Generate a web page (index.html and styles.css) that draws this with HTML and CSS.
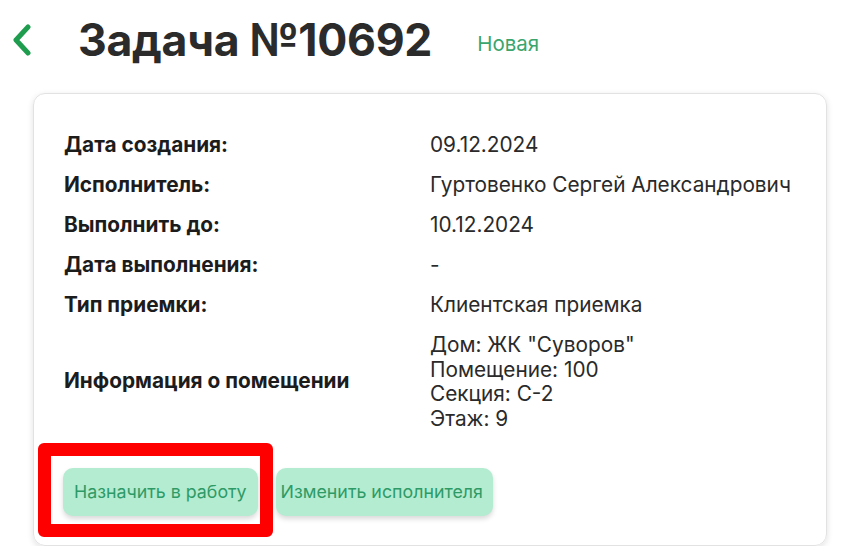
FILE: index.html
```html
<!DOCTYPE html>
<html lang="ru">
<head>
  <meta charset="UTF-8">
  <meta name="viewport" content="width=device-width, initial-scale=1.0">
  <title>Задача №10692</title>
  <link rel="stylesheet" href="styles.css">
</head>
<body>
  <header class="task-header">
    <a class="back-link" href="#">
      <svg width="22" height="32" viewBox="0 0 22 32">
        <path d="M17 3 L5 16 L17 29" fill="none" stroke="#1f9d4f" stroke-width="5" stroke-linecap="round" stroke-linejoin="round"/>
      </svg>
    </a>
    <h1 class="task-title">Задача №10692</h1>
    <span class="task-status">Новая</span>
  </header>

  <div class="task-card">
    <div class="info-grid">
      <div class="info-label">Дата создания:</div>
      <div class="info-value">09.12.2024</div>

      <div class="info-label">Исполнитель:</div>
      <div class="info-value">Гуртовенко Сергей Александрович</div>

      <div class="info-label">Выполнить до:</div>
      <div class="info-value">10.12.2024</div>

      <div class="info-label">Дата выполнения:</div>
      <div class="info-value">-</div>

      <div class="info-label">Тип приемки:</div>
      <div class="info-value">Клиентская приемка</div>

      <div class="info-label">Информация о помещении</div>
      <div class="info-value info-multi">
        Дом: ЖК "Суворов"<br>
        Помещение: 100<br>
        Секция: С-2<br>
        Этаж: 9
      </div>
    </div>

    <div class="card-actions">
      <button class="action-btn">Назначить в работу</button>
      <button class="action-btn action-btn-second">Изменить исполнителя</button>
      <div class="highlight"></div>
    </div>
  </div>
</body>
</html>
```

FILE: styles.css
```css
body {
  font-family: Inter, "Noto Sans", sans-serif;
  margin: 0;
  padding: 0;
  background-color: #fff;
  color: #222;
}

.task-header {
  display: flex;
  align-items: center;
  height: 80px;
  padding-left: 11px;
}

.back-link {
  display: flex;
  width: 22px;
  margin-right: 45px;
}

.task-title {
  margin: 0;
  font-size: 44.6px;
  font-weight: 700;
  color: #2b2b2b;
  letter-spacing: -0.3px;
}

.task-status {
  margin-left: 45px;
  margin-top: 6px;
  font-size: 20.5px;
  color: #3aa56d;
}

.task-card {
  margin: 13px 14px 0 33px;
  width: 794px;
  box-sizing: border-box;
  padding: 31px 30px 29px 29px;
  border: 1px solid #e2e2e2;
  border-radius: 12px;
  box-shadow: 0 2px 6px rgba(0, 0, 0, 0.12);
}

.info-grid {
  display: grid;
  grid-template-columns: 367px 1fr;
  align-items: center;
  font-size: 20.8px;
  line-height: 24px;
}

.info-label {
  font-weight: 700;
  color: #1c1c1c;
  padding: 8px 0 8px 1px;
}

.info-value {
  color: #2a2a2a;
  padding: 8px 0;
}

.info-multi {
  line-height: 24.7px;
  padding: 8px 0 6px;
}

.card-actions {
  position: relative;
  display: flex;
  gap: 18px;
  margin-top: 30px;
}

.action-btn {
  font-family: Inter, "Noto Sans", sans-serif;
  font-size: 17.8px;
  color: #2e9a66;
  background-color: #b3ecd1;
  border: none;
  border-radius: 10px;
  padding: 0 11px;
  height: 48px;
  box-shadow: 0 3px 5px rgba(0, 0, 0, 0.15);
  cursor: pointer;
}

.action-btn-second {
  padding: 0 10px 0 5px;
}

.highlight {
  position: absolute;
  left: -25px;
  top: -25px;
  width: 235px;
  height: 94px;
  box-sizing: border-box;
  border: 13px solid #ff0000;
  border-radius: 6px;
  pointer-events: none;
}
```
